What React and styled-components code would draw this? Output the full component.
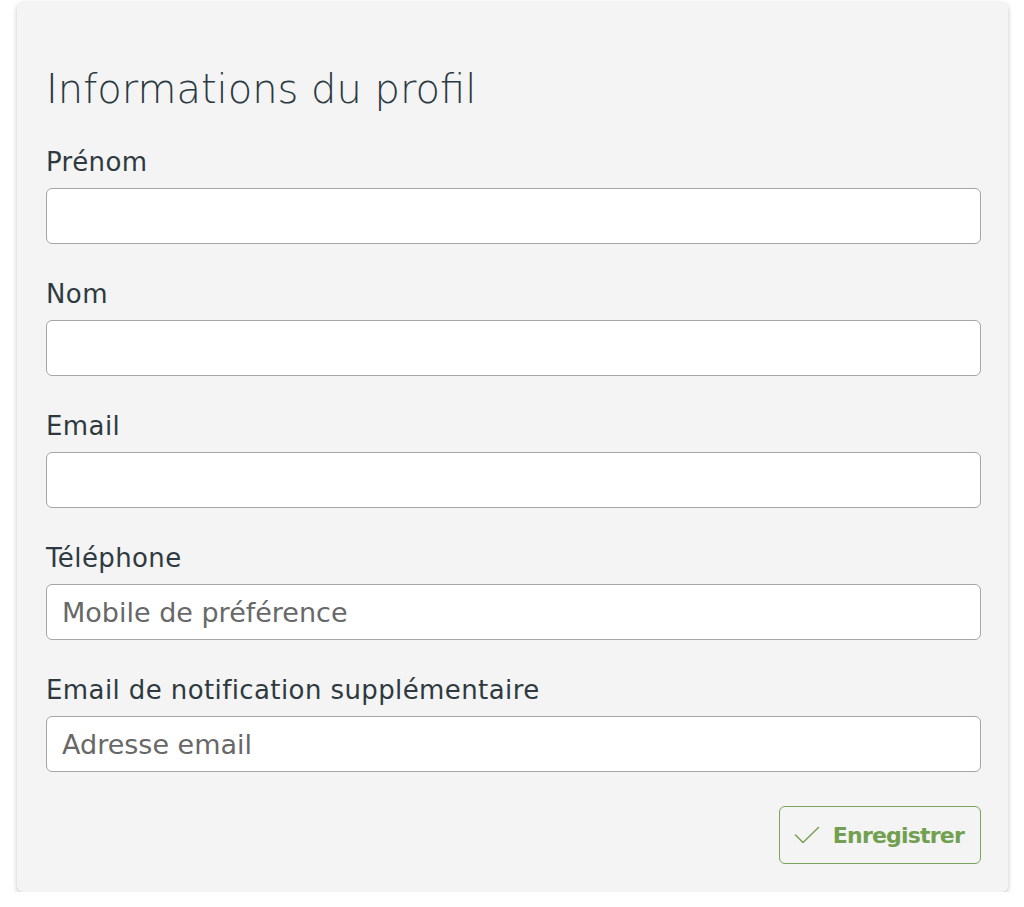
import React from 'react';
import styled, { createGlobalStyle } from 'styled-components';

const GlobalStyle = createGlobalStyle`
  body {
    margin: 0;
    background: #ffffff;
    font-family: "DejaVu Sans", "Open Sans", sans-serif;
  }
  * { box-sizing: border-box; }
`;

const Card = styled.section`
  width: 991px;
  height: 890px;
  margin: 2px 0 0 17px;
  padding: 62px 27px 0 29px;
  background: #f4f4f4;
  border-radius: 6px;
  box-shadow: 0 2px 5px rgba(0, 0, 0, 0.24);
`;

const Title = styled.h2`
  margin: 0 0 33px;
  font-size: 40px;
  line-height: 50px;
  font-weight: 300;
  color: #2b3a42;
`;

const Form = styled.form`
  display: flex;
  flex-direction: column;
  gap: 35px;
`;

const Field = styled.div`
  display: flex;
  flex-direction: column;
  gap: 11px;
`;

const Label = styled.label`
  font-size: 26px;
  line-height: 30px;
  letter-spacing: 0.4px;
  color: #2f3a40;
`;

const Input = styled.input`
  height: 56px;
  width: 100%;
  padding: 0 15px;
  border: 1.5px solid #a6a6a6;
  border-radius: 6px;
  background: #fff;
  font-family: inherit;
  font-size: 27px;
  color: #333;
  outline: none;
  &::placeholder {
    color: #686868;
  }
`;

const Actions = styled.div`
  display: flex;
  justify-content: flex-end;
  margin-top: -1px;
`;

const SaveButton = styled.button`
  display: flex;
  align-items: center;
  gap: 13px;
  height: 58px;
  padding: 0 16px 0 14px;
  border: 1.5px solid #79a45a;
  border-radius: 6px;
  background: transparent;
  color: #72a050;
  font-family: inherit;
  font-size: 22px;
  letter-spacing: -0.8px;
  font-weight: 700;
  cursor: pointer;
`;

const CheckIcon = () => (
  <svg width="26" height="18" viewBox="0 0 26 18" fill="none">
    <path d="M1.5 9 L9 16.5 L24.5 1.5" stroke="#79a45a" strokeWidth="1.6" strokeLinecap="round" strokeLinejoin="round" />
  </svg>
);

const fields = [
  { label: 'Prénom' },
  { label: 'Nom' },
  { label: 'Email' },
  { label: 'Téléphone', placeholder: 'Mobile de préférence' },
  { label: 'Email de notification supplémentaire', placeholder: 'Adresse email' },
];

export default function App() {
  return (
    <>
      <GlobalStyle />
      <Card>
        <Title>Informations du profil</Title>
        <Form onSubmit={e => e.preventDefault()}>
          {fields.map(f => (
            <Field key={f.label}>
              <Label>{f.label}</Label>
              <Input placeholder={f.placeholder} />
            </Field>
          ))}
          <Actions>
            <SaveButton type="submit">
              <CheckIcon />
              Enregistrer
            </SaveButton>
          </Actions>
        </Form>
      </Card>
    </>
  );
}
